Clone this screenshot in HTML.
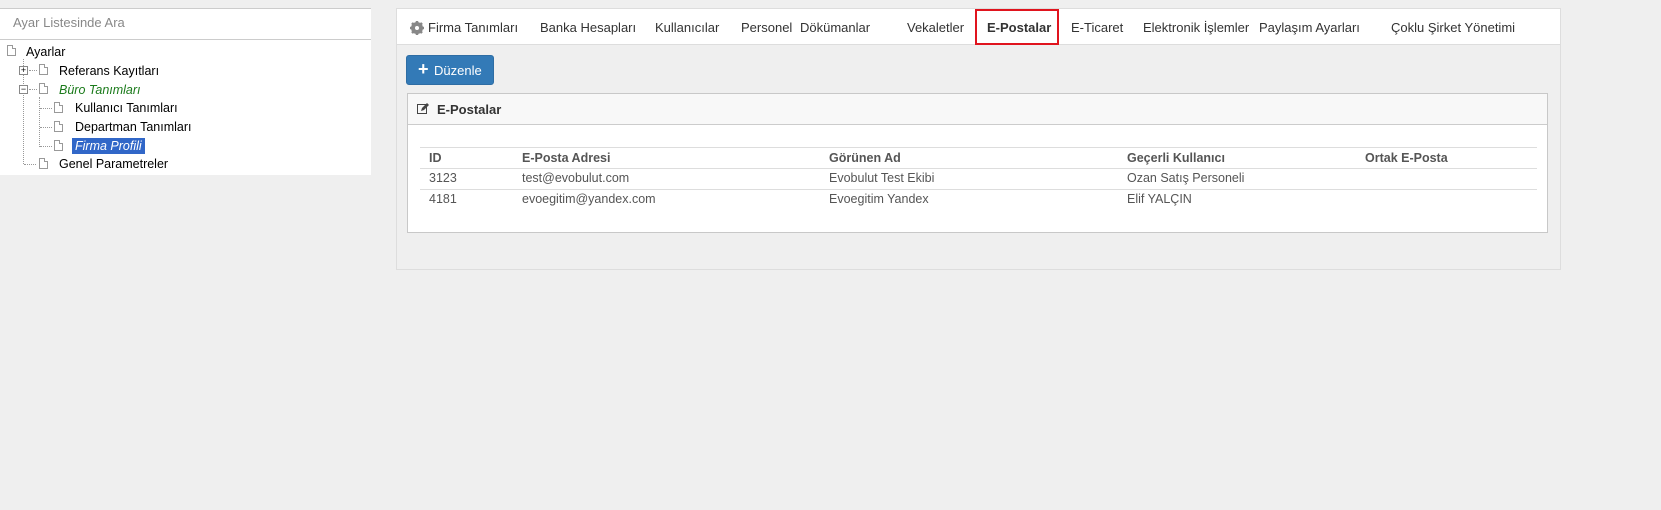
<!DOCTYPE html>
<html><head><meta charset="utf-8">
<style>
*{box-sizing:border-box;margin:0;padding:0}
body{width:1661px;height:510px;background:#efefef;font-family:"Liberation Sans",sans-serif;font-size:13px;color:#333;position:relative;overflow:hidden}
.abs{position:absolute}
#left{left:0;top:8px;width:371px;height:167px;background:#fff;border-top:1px solid #ccc}
#search{left:0;top:0;width:371px;height:31px;border-bottom:1px solid #ccc;color:#888;padding:6px 13px;font-size:13px}
.tn{position:absolute;font-size:12.5px;color:#000;white-space:nowrap}
.doc{position:absolute;width:9px;height:11px;border:1px solid #999;background:#fff}
.doc:after{content:"";position:absolute;right:-1px;top:-1px;width:3px;height:3px;background:#fff;border-left:1px solid #999;border-bottom:1px solid #999}
.dl{position:absolute;border-left:1px dotted #999}
.dh{position:absolute;border-top:1px dotted #999}
.pm{position:absolute;width:9px;height:9px;border:1px solid #888;background:#fff;font-size:9px;line-height:7px;text-align:center;color:#000}
#main{left:396px;top:8px;width:1165px;height:262px;background:#efefef;border:1px solid #ddd}
#tabs{left:0;top:0;width:1163px;height:36px;background:#fff;border-bottom:1px solid #ddd}
.tab{position:absolute;top:11px;font-size:13px;color:#333;white-space:nowrap}
#red{left:578px;top:0;width:84px;height:36px;border:2px solid #e0141e}
#btn{left:9px;top:46px;width:88px;height:30px;background:#337ab7;border-radius:3px;color:#fff;font-size:13px;padding:7px 0 0 27px;border:1px solid #2e6da4}
#panel{left:10px;top:84px;width:1141px;height:140px;background:#fff;border:1px solid #c8c8c8}
#ph{left:0;top:0;width:1139px;height:31px;background:#f8f8f8;border-bottom:1px solid #ccc}
.th{position:absolute;font-weight:bold;color:#555;font-size:12.5px}
.td{position:absolute;color:#555;font-size:12.5px}
.hl{position:absolute;left:12px;width:1117px;border-top:1px solid #ddd}
</style></head><body>
<div id="left" class="abs">
 <div id="search" class="abs">Ayar Listesinde Ara</div>
 <div class="doc" style="left:7px;top:36px"></div><div class="tn" style="left:26px;top:36px">Ayarlar</div>
 <div class="dl" style="left:23px;top:50px;height:105px"></div>
 <div class="pm" style="left:19px;top:57px">+</div><div class="dh" style="left:29px;top:61px;width:8px"></div>
 <div class="doc" style="left:39px;top:55px"></div><div class="tn" style="left:59px;top:55px">Referans Kayıtları</div>
 <div class="pm" style="left:19px;top:76px">−</div><div class="dh" style="left:29px;top:80px;width:8px"></div>
 <div class="doc" style="left:39px;top:74px"></div><div class="tn" style="left:59px;top:74px;color:#1a7a1a;font-style:italic">Büro Tanımları</div>
 <div class="dl" style="left:39px;top:88px;height:50px"></div>
 <div class="dh" style="left:40px;top:99px;width:12px"></div><div class="doc" style="left:54px;top:93px"></div><div class="tn" style="left:75px;top:92px">Kullanıcı Tanımları</div>
 <div class="dh" style="left:40px;top:118px;width:12px"></div><div class="doc" style="left:54px;top:112px"></div><div class="tn" style="left:75px;top:111px">Departman Tanımları</div>
 <div class="dh" style="left:40px;top:137px;width:12px"></div><div class="doc" style="left:54px;top:131px"></div><div class="tn" style="left:72px;top:129px;background:#3167c8;color:#fff;font-style:italic;padding:1px 3px">Firma Profili</div>
 <div class="dh" style="left:24px;top:155px;width:12px"></div><div class="doc" style="left:39px;top:149px"></div><div class="tn" style="left:59px;top:148px">Genel Parametreler</div>
</div>
<div id="main" class="abs">
 <div id="tabs" class="abs">
  <svg class="abs" style="left:13px;top:12px" width="14" height="14" viewBox="0 0 14 14"><circle cx="7" cy="7" r="4.5" fill="none" stroke="#888" stroke-width="3"/><g stroke="#888" stroke-width="2.5"><line x1="7" y1="0" x2="7" y2="14"/><line x1="0" y1="7" x2="14" y2="7"/><line x1="2" y1="2" x2="12" y2="12"/><line x1="12" y1="2" x2="2" y2="12"/></g><circle cx="7" cy="7" r="2" fill="#fff"/></svg>
  <div class="tab" style="left:31px">Firma Tanımları</div>
  <div class="tab" style="left:143px">Banka Hesapları</div>
  <div class="tab" style="left:258px">Kullanıcılar</div>
  <div class="tab" style="left:344px">Personel</div>
  <div class="tab" style="left:403px">Dökümanlar</div>
  <div class="tab" style="left:510px">Vekaletler</div>
  <div class="tab" style="left:590px;font-weight:bold">E-Postalar</div>
  <div class="tab" style="left:674px">E-Ticaret</div>
  <div class="tab" style="left:746px">Elektronik İşlemler</div>
  <div class="tab" style="left:862px">Paylaşım Ayarları</div>
  <div class="tab" style="left:994px">Çoklu Şirket Yönetimi</div>
  <div id="red" class="abs"></div>
 </div>
 <div id="btn" class="abs"><span style="position:absolute;left:11px;top:3px;font-size:18px;font-weight:bold">+</span>Düzenle</div>
 <div id="panel" class="abs">
  <div id="ph" class="abs">
   <svg class="abs" style="left:9px;top:9px" width="12" height="12" viewBox="0 0 12 12"><rect x="0.5" y="1.5" width="9" height="9" fill="none" stroke="#444"/><path d="M4 8l1-3 5-5 2 2-5 5z" fill="#444"/></svg>
   <div class="abs" style="left:29px;top:8px;font-weight:bold;font-size:13px;color:#333">E-Postalar</div>
  </div>
  <div class="hl" style="top:53px"></div>
  <div class="th" style="left:21px;top:57px">ID</div>
  <div class="th" style="left:114px;top:57px">E-Posta Adresi</div>
  <div class="th" style="left:421px;top:57px">Görünen Ad</div>
  <div class="th" style="left:719px;top:57px">Geçerli Kullanıcı</div>
  <div class="th" style="left:957px;top:57px">Ortak E-Posta</div>
  <div class="hl" style="top:74px"></div>
  <div class="td" style="left:21px;top:77px">3123</div>
  <div class="td" style="left:114px;top:77px">test@evobulut.com</div>
  <div class="td" style="left:421px;top:77px">Evobulut Test Ekibi</div>
  <div class="td" style="left:719px;top:77px">Ozan Satış Personeli</div>
  <div class="hl" style="top:95px"></div>
  <div class="td" style="left:21px;top:98px">4181</div>
  <div class="td" style="left:114px;top:98px">evoegitim@yandex.com</div>
  <div class="td" style="left:421px;top:98px">Evoegitim Yandex</div>
  <div class="td" style="left:719px;top:98px">Elif YALÇIN</div>
 </div>
</div>
</body></html>
